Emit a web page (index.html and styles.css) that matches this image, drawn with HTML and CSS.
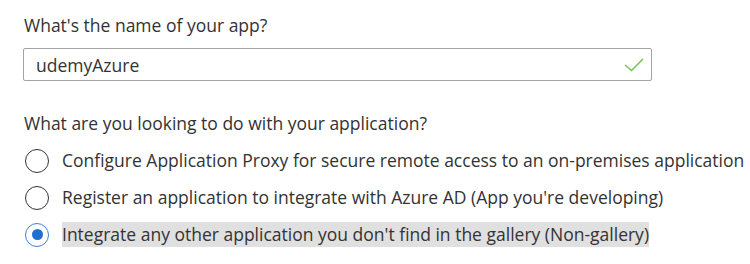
FILE: index.html
```html
<!DOCTYPE html>
<html>
<head>
<meta charset="utf-8">
<link rel="stylesheet" href="styles.css">
</head>
<body>
<div class="form">
  <div class="label">What's the name of your app?</div>
  <div class="input">
    <span class="value">udemyAzure</span>
    <svg class="check" width="20" height="14" viewBox="0 0 20 14"><path d="M1 7 L7.5 12.5 L19 1" fill="none" stroke="#7ac25a" stroke-width="1.6"/></svg>
  </div>
  <div class="label question">What are you looking to do with your application?</div>
  <div class="options">
    <div class="option"><span class="radio"></span><span class="text">Configure Application Proxy for secure remote access to an on-premises application</span></div>
    <div class="option"><span class="radio"></span><span class="text">Register an application to integrate with Azure AD (App you're developing)</span></div>
    <div class="option selected"><span class="radio"></span><span class="text">Integrate any other application you don't find in the gallery (Non-gallery)</span></div>
  </div>
</div>
</body>
</html>
```
FILE: styles.css
```css
html, body {
  margin: 0;
  padding: 0;
  background: #fff;
}
body {
  font-family: "Open Sans", "Noto Sans", sans-serif;
  color: #333;
  font-size: 17.5px;
}
.form {
  padding: 13px 0 0 24px;
  display: flex;
  flex-direction: column;
}
.label {
  line-height: 24px;
  height: 24px;
  white-space: nowrap;
}
.input {
  margin-top: 11px;
  margin-left: -1px;
  width: 629px;
  height: 33px;
  box-sizing: border-box;
  border: 1px solid #a3a3a3;
  border-radius: 2px;
  display: flex;
  align-items: center;
  justify-content: space-between;
  padding: 0 7px 0 12px;
}
.check {
  display: block;
}
.question {
  margin-top: 30px;
}
.options {
  margin-top: 13px;
  display: flex;
  flex-direction: column;
  gap: 12px;
}
.option {
  display: flex;
  align-items: center;
  height: 25px;
  gap: 13px;
}
.radio {
  width: 24px;
  height: 24px;
  flex: none;
  box-sizing: border-box;
  border: 1.5px solid #333;
  border-radius: 50%;
  margin-left: 1px;
  display: flex;
  align-items: center;
  justify-content: center;
}
.selected .radio {
  border-color: #3a7fd5;
}
.selected .radio::after {
  content: "";
  width: 11px;
  height: 11px;
  border-radius: 50%;
  background: #1f6fd0;
}
.text {
  line-height: 25px;
  white-space: nowrap;
}
.selected .text {
  background: #e0e0e0;
}
```
